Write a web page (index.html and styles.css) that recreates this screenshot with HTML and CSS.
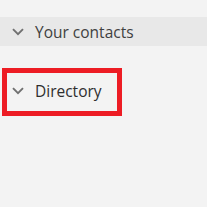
FILE: index.html
```html
<!DOCTYPE html>
<html>
<head>
<meta charset="utf-8">
<link rel="stylesheet" href="styles.css">
</head>
<body>
<div class="pane">
  <div class="group group--header">
    <svg class="chev" width="12" height="8" viewBox="0 0 12 8"><path d="M1 1.2 L6 6.2 L11 1.2" fill="none" stroke="#707070" stroke-width="1.9"/></svg>
    <span class="label">Your contacts</span>
  </div>
  <div class="group group--highlight">
    <svg class="chev" width="12" height="8" viewBox="0 0 12 8"><path d="M1 1.2 L6 6.2 L11 1.2" fill="none" stroke="#707070" stroke-width="1.9"/></svg>
    <span class="label label--dark">Directory</span>
  </div>
</div>
</body>
</html>
```
FILE: styles.css
```css
html, body {
  margin: 0;
  padding: 0;
  background: #f3f3f3;
  width: 207px;
  height: 207px;
  overflow: hidden;
}
.pane {
  padding-top: 17px;
  font-family: "Open Sans", "Noto Sans", sans-serif;
}
.group {
  display: flex;
  align-items: center;
  box-sizing: border-box;
}
.group--header {
  height: 29px;
  background: #e8e8e8;
  padding-left: 12px;
}
.group--highlight {
  margin-top: 22px;
  margin-left: 2px;
  width: 120px;
  height: 48px;
  border: 5px solid #ed1c24;
  padding-left: 5px;
  padding-bottom: 2px;
}
.chev {
  flex: none;
  margin-right: 11px;
}
.label {
  font-size: 15.5px;
  color: #404040;
  line-height: 20px;
}
.label--dark {
  color: #2e2e2e;
}
```
